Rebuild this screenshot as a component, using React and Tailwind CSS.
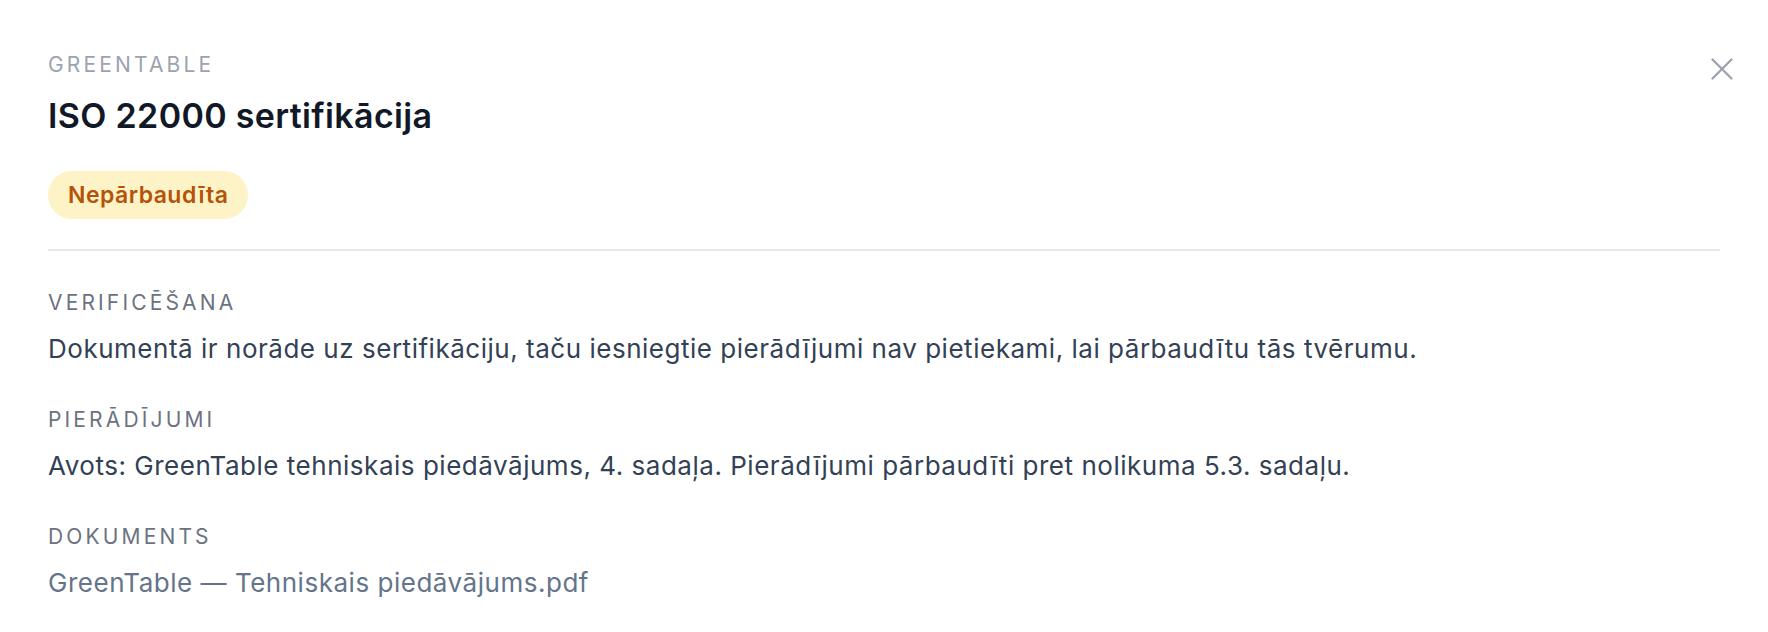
import React from "react";

const sections = [
  {
    label: "Verificēšana",
    body: "Dokumentā ir norāde uz sertifikāciju, taču iesniegtie pierādījumi nav pietiekami, lai pārbaudītu tās tvērumu.",
    tone: "text-[#334155]",
  },
  {
    label: "Pierādījumi",
    body: "Avots: GreenTable tehniskais piedāvājums, 4. sadaļa. Pierādījumi pārbaudīti pret nolikuma 5.3. sadaļu.",
    tone: "text-[#334155]",
  },
  {
    label: "Dokuments",
    body: "GreenTable — Tehniskais piedāvājums.pdf",
    tone: "text-[#64748b]",
  },
];

function CloseIcon() {
  return (
    <svg width="22" height="22" viewBox="0 0 22 22" fill="none" stroke="#9ca3af" strokeWidth="2.3" strokeLinecap="round">
      <path d="M1.5 1.5 L20.5 20.5" />
      <path d="M20.5 1.5 L1.5 20.5" />
    </svg>
  );
}

export default function App() {
  return (
    <div
      className="relative w-full h-[632px] bg-white px-[48px] pt-[51px] antialiased"
      style={{ fontFamily: "Inter, 'Noto Sans', sans-serif" }}
    >
      <button className="absolute right-[35px] top-[58px] p-0 bg-transparent border-0" aria-label="Aizvērt">
        <CloseIcon />
      </button>

      <div className="text-[21px] leading-[28px] tracking-[0.15em] uppercase text-[#9ca3af]">
        GreenTable
      </div>
      <h2 className="mt-[15px] text-[34px] leading-[44px] font-semibold tracking-[0.01em] text-[#111827]">
        ISO 22000 sertifikācija
      </h2>
      <div className="mt-[33px] flex">
        <span className="inline-flex items-center h-[48px] px-[20px] rounded-full bg-[#fef3c7] text-[#b45309] text-[23px] tracking-[0.02em] font-semibold">
          Nepārbaudīta
        </span>
      </div>

      <div className="mt-[30px] h-[2px] bg-[#e5e7eb]" />

      <div className="mt-[38px] flex flex-col gap-[39px]">
        {sections.map((s) => (
          <div key={s.label} className="flex flex-col gap-[14px]">
            <div className="text-[21px] leading-[28px] tracking-[0.15em] uppercase text-[#6b7280]">
              {s.label}
            </div>
            <div className={`text-[26px] leading-[36px] tracking-[0.02em] ${s.tone}`}>{s.body}</div>
          </div>
        ))}
      </div>
    </div>
  );
}
